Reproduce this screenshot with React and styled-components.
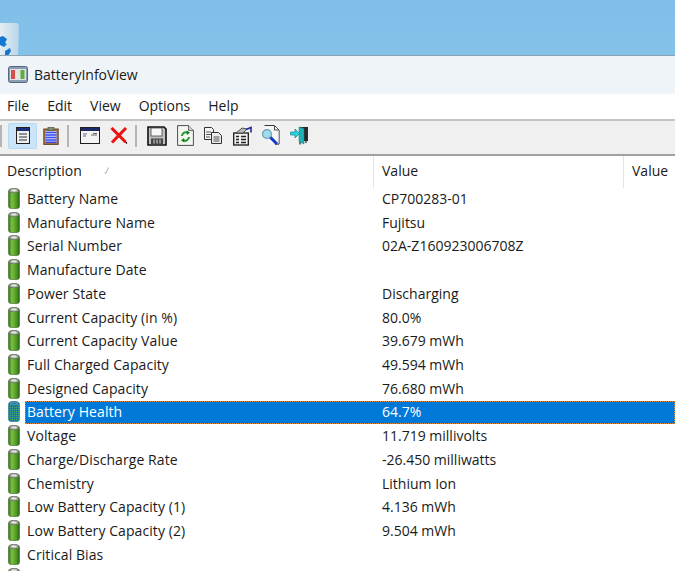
import React from 'react'
import styled, { createGlobalStyle } from 'styled-components'

const GlobalStyle = createGlobalStyle`
  html, body {
    margin: 0;
    padding: 0;
    overflow: hidden;
    background: #fff;
  }
`

const Page = styled.div`
  width: 675px;
  height: 571px;
  overflow: hidden;
  display: flex;
  flex-direction: column;
  font-family: "Open Sans", "Noto Sans", sans-serif;
  color: #1a1a1a;
`

const Desktop = styled.div`
  height: 56px;
  flex: none;
  position: relative;
  overflow: hidden;
  background: linear-gradient(180deg, #7fbfe8 0%, #84c2e9 100%);
  border-bottom: 1px solid #8aa4b6;
  box-sizing: border-box;
`

const BinIcon = styled.svg`
  position: absolute;
  left: 0;
  top: 22px;
`

const TitleBar = styled.div`
  height: 38px;
  flex: none;
  display: flex;
  align-items: center;
  gap: 6px;
  padding: 0 0 2px 8px;
  background: #eef4f8;
  font-size: 14px;
  box-sizing: border-box;
`

const MenuBar = styled.div`
  height: 25px;
  flex: none;
  display: flex;
  align-items: center;
  gap: 18px;
  padding: 0 0 2px 7px;
  background: #fff;
  font-size: 14px;
  box-sizing: border-box;
`

const Toolbar = styled.div`
  height: 37px;
  flex: none;
  display: flex;
  align-items: center;
  padding-bottom: 4px;
  background: #f0f0f0;
  border-top: 2px solid #c4c4c4;
  border-bottom: 2px solid #a0a0a0;
  box-sizing: border-box;
`

const Separator = styled.div`
  width: 2px;
  height: 22px;
  flex: none;
  margin: 0 ${({ $right }) => $right}px 0 ${({ $left }) => $left}px;
  background: #b4b4b4;
`

const ToolButton = styled.div`
  width: ${({ $wide }) => ($wide ? 29 : 28)}px;
  height: 26px;
  flex: none;
  display: flex;
  align-items: center;
  justify-content: center;
  box-sizing: border-box;
  border-radius: 2px;
  background: ${({ $active }) => ($active ? '#cce4f7' : 'transparent')};
  border: 1px solid ${({ $active }) => ($active ? '#b5d8f3' : 'transparent')};
`

const HeaderRow = styled.div`
  height: 32px;
  flex: none;
  display: grid;
  grid-template-columns: 374px 250px 1fr;
  background: #fff;
  font-size: 14px;
`

const HeaderCell = styled.div`
  display: flex;
  align-items: center;
  gap: 22px;
  padding: 0 0 3px ${({ $first }) => ($first ? 7 : 8)}px;
  border-right: 1px solid #e5e5e5;
  &:last-child {
    border-right: none;
  }
`

const List = styled.div`
  display: flex;
  flex-direction: column;
  background: #fff;
  font-size: 14px;
`

const Row = styled.div`
  height: 23.72px;
  flex: none;
  display: grid;
  grid-template-columns: 25px 1fr;
  align-items: start;
`

const IconCell = styled.div`
  display: flex;
  padding-left: 8px;
`

const Cells = styled.div`
  height: 23px;
  display: grid;
  grid-template-columns: 349px 1fr;
  line-height: 21.8px;
  box-sizing: border-box;
  white-space: nowrap;
  ${({ $selected }) =>
    $selected &&
    `
    background: #0078d7;
    color: #fff;
    outline: 1px dotted #e08a3c;
    outline-offset: -1px;
  `}
`

const Label = styled.div`
  padding-left: 2px;
  letter-spacing: 0.08px;
`

const Value = styled.div`
  padding-left: 8px;
`

const rows = [
  ['Battery Name', 'CP700283-01'],
  ['Manufacture Name', 'Fujitsu'],
  ['Serial Number', '02A-Z160923006708Z'],
  ['Manufacture Date', ''],
  ['Power State', 'Discharging'],
  ['Current Capacity (in %)', '80.0%'],
  ['Current Capacity Value', '39.679 mWh'],
  ['Full Charged Capacity', '49.594 mWh'],
  ['Designed Capacity', '76.680 mWh'],
  ['Battery Health', '64.7%', true],
  ['Voltage', '11.719 millivolts'],
  ['Charge/Discharge Rate', '-26.450 milliwatts'],
  ['Chemistry', 'Lithium Ion'],
  ['Low Battery Capacity (1)', '4.136 mWh'],
  ['Low Battery Capacity (2)', '9.504 mWh'],
  ['Critical Bias', ''],
  ['', ''],
]

const Battery = ({ selected }) => (
  <svg width="12" height="21" viewBox="0 0 12 21">
    <defs>
      <linearGradient id="cell" x1="0" x2="1" y1="0" y2="0">
        <stop offset="0" stopColor="#2a7018" />
        <stop offset="0.3" stopColor="#7cc040" />
        <stop offset="0.7" stopColor="#4f9a26" />
        <stop offset="1" stopColor="#2a6416" />
      </linearGradient>
      <pattern id="dither" width="2" height="2" patternUnits="userSpaceOnUse">
        <rect width="2" height="2" fill="#1f7fa0" />
        <rect width="1" height="1" fill="#4aa870" />
        <rect x="1" y="1" width="1" height="1" fill="#0f6fb8" />
      </pattern>
    </defs>
    <rect x="0.5" y="1" width="11" height="19.5" rx="2.5" fill={selected ? 'url(#dither)' : 'url(#cell)'} stroke={selected ? '#1c6f90' : '#3d6a2c'} strokeWidth="0.6" />
    <ellipse cx="6" cy="2.6" rx="4.6" ry="2.2" fill={selected ? '#4f9ab0' : '#a6aaa3'} stroke={selected ? '#1c6f90' : '#666e61'} strokeWidth="0.7" />
    <ellipse cx="6" cy="2.4" rx="2.6" ry="1" fill={selected ? '#2a7fa8' : '#e6e8e4'} />
  </svg>
)

const AppIcon = () => (
  <svg width="20" height="17" viewBox="0 0 20 17">
    <rect x="0.5" y="0.5" width="19" height="16" rx="2" fill="#8b9db5" stroke="#56687f" />
    <rect x="2" y="3" width="16" height="11" fill="#dfe3e8" />
    <rect x="3" y="4" width="4" height="9" fill="#d2504c" />
    <rect x="8" y="4" width="4" height="9" fill="#e6e6dc" />
    <rect x="12.5" y="4" width="4" height="9" fill="#5fae3c" />
  </svg>
)

const ReportIcon = () => (
  <svg width="14" height="17" viewBox="0 0 14 17">
    <rect x="0.5" y="0.5" width="13" height="16" fill="#eef0f2" stroke="#202020" />
    <rect x="1" y="1" width="12" height="3" fill="#1c2f7a" />
    <path d="M3 7h8M3 10h8M3 13h8" stroke="#333" strokeWidth="1.2" />
  </svg>
)

const ClipboardIcon = () => (
  <svg width="16" height="18" viewBox="0 0 16 18">
    <rect x="0.8" y="2" width="14.4" height="15.4" fill="#a9713c" stroke="#5d4a2a" />
    <rect x="2.5" y="4" width="11" height="12" fill="#d8dcff" />
    <path d="M2.5 5.5h11M2.5 8h11M2.5 10.5h11M2.5 13h11M2.5 15.3h11" stroke="#3a48ea" strokeWidth="1.5" />
    <rect x="5" y="0.5" width="6" height="3" fill="#7f8f70" stroke="#4d5a3e" strokeWidth="0.7" />
  </svg>
)

const WindowIcon = () => (
  <svg width="20" height="17" viewBox="0 0 20 17">
    <rect x="0.5" y="0.5" width="19" height="16" fill="#f4f4f4" stroke="#202020" />
    <rect x="1" y="1" width="18" height="3" fill="#1c2a6a" />
    <path d="M3 7h4M3 9h3M11 8h6M13 6.5h4" stroke="#666" strokeWidth="1.2" />
  </svg>
)

const CrossIcon = () => (
  <svg width="18" height="17" viewBox="0 0 18 17">
    <path d="M3.5 3L17 16.5" stroke="#401010" strokeWidth="1.2" />
    <path d="M1.5 1L15.5 15" stroke="#ee1010" strokeWidth="3" />
    <path d="M16 1L2 15.5" stroke="#ee1010" strokeWidth="3" />
  </svg>
)

const SaveIcon = () => (
  <svg width="20" height="20" viewBox="0 0 20 20">
    <path d="M1 1h16l2 2v16H1z" fill="#c0c0c0" stroke="#111" strokeWidth="1.6" />
    <rect x="4" y="2" width="11" height="8" fill="#f8f8f8" stroke="#333" strokeWidth="0.7" />
    <rect x="4" y="12.5" width="12" height="6" fill="#444" />
    <path d="M7 13.5v4M10 13.5v4M13 13.5v4" stroke="#ddd" strokeWidth="1" />
  </svg>
)

const RefreshIcon = () => (
  <svg width="17" height="21" viewBox="0 0 17 21">
    <path d="M0.6 0.6h11l4.8 4.8v15H0.6z" fill="#f6f6f0" stroke="#3a3a3a" strokeWidth="0.9" />
    <path d="M11.6 0.6v4.8h4.8" fill="#ddd" stroke="#3a3a3a" strokeWidth="0.8" />
    <path d="M5 11a4 4 0 0 1 6-3.2" fill="none" stroke="#1a9a2c" strokeWidth="2" />
    <path d="M12 12a4 4 0 0 1-6 3.2" fill="none" stroke="#1a9a2c" strokeWidth="2" />
    <path d="M9.5 5.5l3.5 2-3 2.4zM7.5 17.5l-3.5-2 3-2.4z" fill="#147a22" />
  </svg>
)

const CopyIcon = () => (
  <svg width="19" height="17" viewBox="0 0 19 17">
    <path d="M0.5 0.5h7l2 2v10h-9z" fill="#f4f4f4" stroke="#333" />
    <path d="M7.5 5.5h7l3 3v8h-10z" fill="#ececec" stroke="#333" />
    <path d="M2 5h5M2 7.5h5M2 10h4M9.5 10h6M9.5 12h6M9.5 14h6" stroke="#555" strokeWidth="1" />
  </svg>
)

const PropertiesIcon = () => (
  <svg width="20" height="20" viewBox="0 0 20 20">
    <rect x="0.7" y="7" width="14.6" height="12" fill="#f2f2f2" stroke="#1a1a1a" strokeWidth="1.3" />
    <path d="M3 10.5h3M8 10.5h5M3 13.5h3M8 13.5h5M3 16.5h3M8 16.5h5" stroke="#222" strokeWidth="1.4" />
    <path d="M3 7l6-5 5 1-4 4z" fill="#b9b9b9" stroke="#333" strokeWidth="0.8" />
    <path d="M13 3.5l5-2v5" fill="none" stroke="#1d2a96" strokeWidth="1.6" />
  </svg>
)

const FindIcon = () => (
  <svg width="18" height="21" viewBox="0 0 18 21">
    <path d="M2.5 0.6h10l4.5 4.5v14H13" fill="#f6f6f6" stroke="#222" strokeWidth="1" />
    <path d="M3 1h9.5l4 4v13.5H7L3 9z" fill="#f6f6f6" />
    <path d="M12.5 1v4h4" fill="none" stroke="#222" strokeWidth="0.8" />
    <path d="M8 12l7 7" stroke="#1638c8" strokeWidth="3" />
    <circle cx="5" cy="9" r="4.4" fill="#9fdcf0" stroke="#6e9cb0" strokeWidth="1.2" />
  </svg>
)

const ExitIcon = () => (
  <svg width="19" height="19" viewBox="0 0 19 19">
    <path d="M9 1h9v14H9z" fill="#2a2a2a" />
    <path d="M9 1l5 1.5V18L9 15.5z" fill="#1fb2b8" stroke="#107a80" strokeWidth="0.5" />
    <path d="M0.5 6h4.5V3l4.5 4.5L5 12V9H0.5z" fill="#22d8e0" stroke="#0c7078" strokeWidth="0.6" />
    <path d="M10 16v2.5M16 15v2" stroke="#222" strokeWidth="1.2" />
  </svg>
)

const BinGlyph = () => (
  <BinIcon width="20" height="34" viewBox="0 0 20 34">
    <defs>
      <linearGradient id="bin" x1="0" x2="1" y1="0" y2="0">
        <stop offset="0" stopColor="#e4eef4" />
        <stop offset="1" stopColor="#b9d6e8" />
      </linearGradient>
    </defs>
    <path d="M0 1h17l2 2-1 31H0z" fill="url(#bin)" />
    <path d="M0 15l3-1 4 3-2 4 2 1-3 3-4-2zM5 29l5-3 1 3-3 5H5z" fill="#1478d0" />
  </BinIcon>
)

const App = () => {
  return (
    <Page>
      <GlobalStyle />
      <Desktop>
        <BinGlyph />
      </Desktop>
      <TitleBar>
        <AppIcon />
        BatteryInfoView
      </TitleBar>
      <MenuBar>
        <span>File</span>
        <span>Edit</span>
        <span>View</span>
        <span>Options</span>
        <span>Help</span>
      </MenuBar>
      <Toolbar>
        <Separator $left={0} $right={6} />
        <ToolButton $active $wide><ReportIcon /></ToolButton>
        <ToolButton><ClipboardIcon /></ToolButton>
        <Separator $left={2} $right={6} />
        <ToolButton $wide><WindowIcon /></ToolButton>
        <ToolButton $wide><CrossIcon /></ToolButton>
        <Separator $left={2} $right={5} />
        <ToolButton $wide><SaveIcon /></ToolButton>
        <ToolButton><RefreshIcon /></ToolButton>
        <ToolButton $wide><CopyIcon /></ToolButton>
        <ToolButton $wide><PropertiesIcon /></ToolButton>
        <ToolButton><FindIcon /></ToolButton>
        <ToolButton><ExitIcon /></ToolButton>
      </Toolbar>
      <HeaderRow>
        <HeaderCell $first>
          Description
          <svg width="6" height="7" viewBox="0 0 6 7">
            <path d="M4.5 0.5L2 6H0.5" fill="none" stroke="#b0b0b0" />
          </svg>
        </HeaderCell>
        <HeaderCell>Value</HeaderCell>
        <HeaderCell>Value</HeaderCell>
      </HeaderRow>
      <List>
        {rows.map(([name, value, selected], index) => (
          <Row key={index}>
            <IconCell><Battery selected={selected} /></IconCell>
            <Cells $selected={selected}>
              <Label>{name}</Label>
              <Value>{value}</Value>
            </Cells>
          </Row>
        ))}
      </List>
    </Page>
  )
}

export default App
